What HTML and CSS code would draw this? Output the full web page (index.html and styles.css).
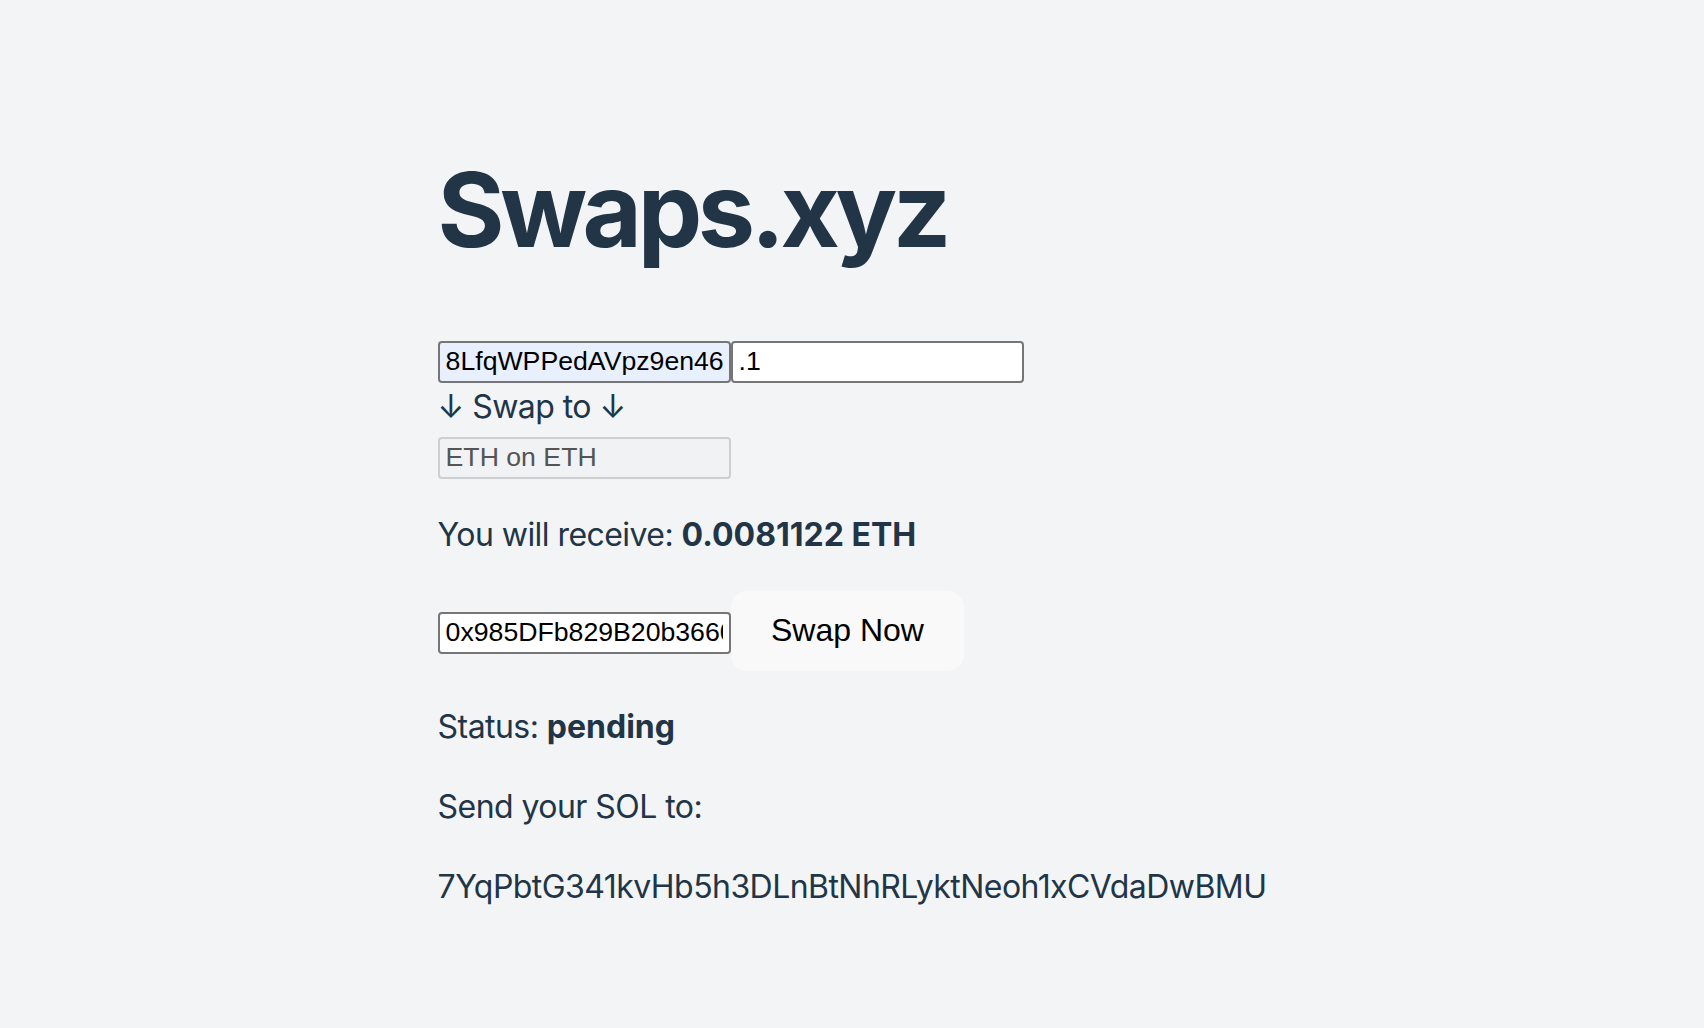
FILE: index.html
```html
<!DOCTYPE html>
<html lang="en">
<head>
  <meta charset="UTF-8">
  <title>Swaps.xyz</title>
  <link rel="stylesheet" href="styles.css">
</head>
<body>

<div class="app">
  <h1>Swaps.xyz</h1>

  <div class="from-row"><input class="autofilled" type="text" value="8LfqWPPedAVpz9en46ZkR3vUqTbD5sXyGhJm2NcWe"><input type="text" value=".1"></div>
  <div class="swap-to">↓ Swap to ↓</div>
  <input class="to-token" type="text" value="ETH on ETH" disabled>

  <p>You will receive: <b>0.0081122 ETH</b></p>

  <div class="send-row"><input type="text" value="0x985DFb829B20b3660a4E7cD21F93b58e0A6c4D17"><button class="swap-btn">Swap Now</button></div>

  <p>Status: <b>pending</b></p>
  <p>Send your SOL to:</p>
  <p>7YqPbtG341kvHb5h3DLnBtNhRLyktNeoh1xCVdaDwBMU</p>
</div>

</body>
</html>
```

FILE: styles.css
```css
  body {
    margin: 0;
    display: flex;
    place-items: center;
    min-height: 100vh;
    background: #f3f4f6;
    color: #213547;
    font-family: Inter, "Noto Sans", sans-serif;
    font-size: 32px;
    line-height: 1.5;
    letter-spacing: -0.55px;
  }

  .app {
    margin: 0 auto;
    text-align: left;
  }

  h1 {
    font-size: 3.2em;
    line-height: 1.1;
    margin: 0.67em 0;
    letter-spacing: -4.4px;
  }

  p {
    margin: 1em 0;
  }

  b {
    letter-spacing: 0;
  }

  input {
    box-sizing: border-box;
    width: 293px;
    height: 42px;
    padding: 0 6px;
    border: 2px solid #767676;
    border-radius: 4px;
    background: white;
    color: black;
    font-family: "Liberation Sans", Arial, sans-serif;
    font-size: 26.67px;
    letter-spacing: normal;
    vertical-align: baseline;
  }

  .autofilled {
    background: #e8f0fe;
  }

  .to-token {
    border-color: rgba(118, 118, 118, 0.3);
    background: rgba(239, 239, 239, 0.3);
    color: #545454;
  }

  .swap-btn {
    padding: 19.2px 38.4px;
    border: 2px solid transparent;
    border-radius: 16px;
    background: #f9f9f9;
    color: black;
    font-family: "Liberation Sans", Arial, sans-serif;
    font-size: 32px;
    line-height: normal;
    letter-spacing: normal;
    cursor: pointer;
  }
```
